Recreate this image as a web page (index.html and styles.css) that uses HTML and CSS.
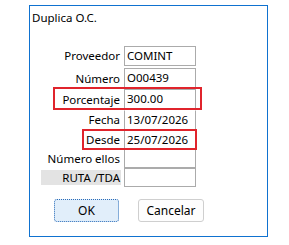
FILE: index.html
```html
<!doctype html>
<html lang="es">

<head>
	<meta charset="UTF-8" />
	<meta name="viewport" content="width=device-width, initial-scale=1.0" />
	<title>Duplica O.C.</title>
	<link rel="stylesheet" href="styles.css">
</head>

<body>
	<div class="dialog">
		<div class="title">Duplica O.C.</div>
		<div class="form">
			<div class="row r1">
				<label>Proveedor</label>
				<div class="field">COMINT</div>
			</div>
			<div class="row r2">
				<label>Número</label>
				<div class="field">O00439</div>
			</div>
			<div class="row r3">
				<label>Porcentaje</label>
				<div class="field">300.00</div>
			</div>
			<div class="row r4">
				<label>Fecha</label>
				<div class="field plain">13/07/2026</div>
			</div>
			<div class="row r5">
				<label>Desde</label>
				<div class="field">25/07/2026</div>
			</div>
			<div class="row r6">
				<label>Número ellos</label>
				<div class="field"></div>
			</div>
			<div class="row r7">
				<label class="shaded">RUTA /TDA</label>
				<div class="field"></div>
			</div>
		</div>
		<div class="button-container">
			<button class="btn default">OK</button>
			<button class="btn">Cancelar</button>
		</div>
		<div class="mark mark-porcentaje"></div>
		<div class="mark mark-desde"></div>
	</div>
</body>

</html>
```

FILE: styles.css
```css
* {
	margin: 0;
	padding: 0;
	box-sizing: border-box;
}

body {
	font-family: "Noto Sans", Arial, sans-serif;
	font-size: 11.5px;
	color: #000;
	background-color: #fff;
}

.dialog {
	position: relative;
	margin: 5px 0 0 29px;
	width: 239px;
	height: 232px;
	border: 1px solid #0f72d0;
	background-color: #fff;
}

.title {
	padding: 4px 0 0 2px;
	line-height: 16px;
	height: 40px;
}

.row {
	display: grid;
	grid-template-columns: 91px 72px;
	column-gap: 3px;
	height: 20px;
	align-items: center;
}

.r1 {
	margin-bottom: 2px;
}

.r2,
.r3 {
	height: 21px;
}

.r5,
.r6,
.r7 {
	height: 19px;
}

.row label {
	text-align: right;
	padding-right: 1px;
	line-height: 16px;
}

.row label.shaded {
	justify-self: end;
	width: 80px;
	background-color: #e3e3e3;
	line-height: 15px;
}

.field {
	height: 100%;
	border: 1px solid #ababab;
	padding-left: 2px;
	line-height: 18px;
	white-space: nowrap;
}

.field.plain {
	border-top-color: transparent;
	border-bottom-color: transparent;
}

.button-container {
	display: flex;
	gap: 19px;
	margin: 12px 0 0 24px;
}

.btn {
	font-family: inherit;
	font-size: 12px;
	width: 66px;
	height: 23px;
	border: 1px solid #cfcfcf;
	border-radius: 3px;
	background-color: #fdfdfd;
	color: #000;
}

.btn.default {
	width: 65px;
	background-color: #e1eefa;
	border: 1px dotted #2b6cb8;
}

.mark {
	position: absolute;
	border: 2px solid #e0242c;
}

.mark-porcentaje {
	left: 23px;
	top: 81px;
	width: 149px;
	height: 23px;
}

.mark-desde {
	left: 52px;
	top: 123px;
	width: 115px;
	height: 21px;
}
```
